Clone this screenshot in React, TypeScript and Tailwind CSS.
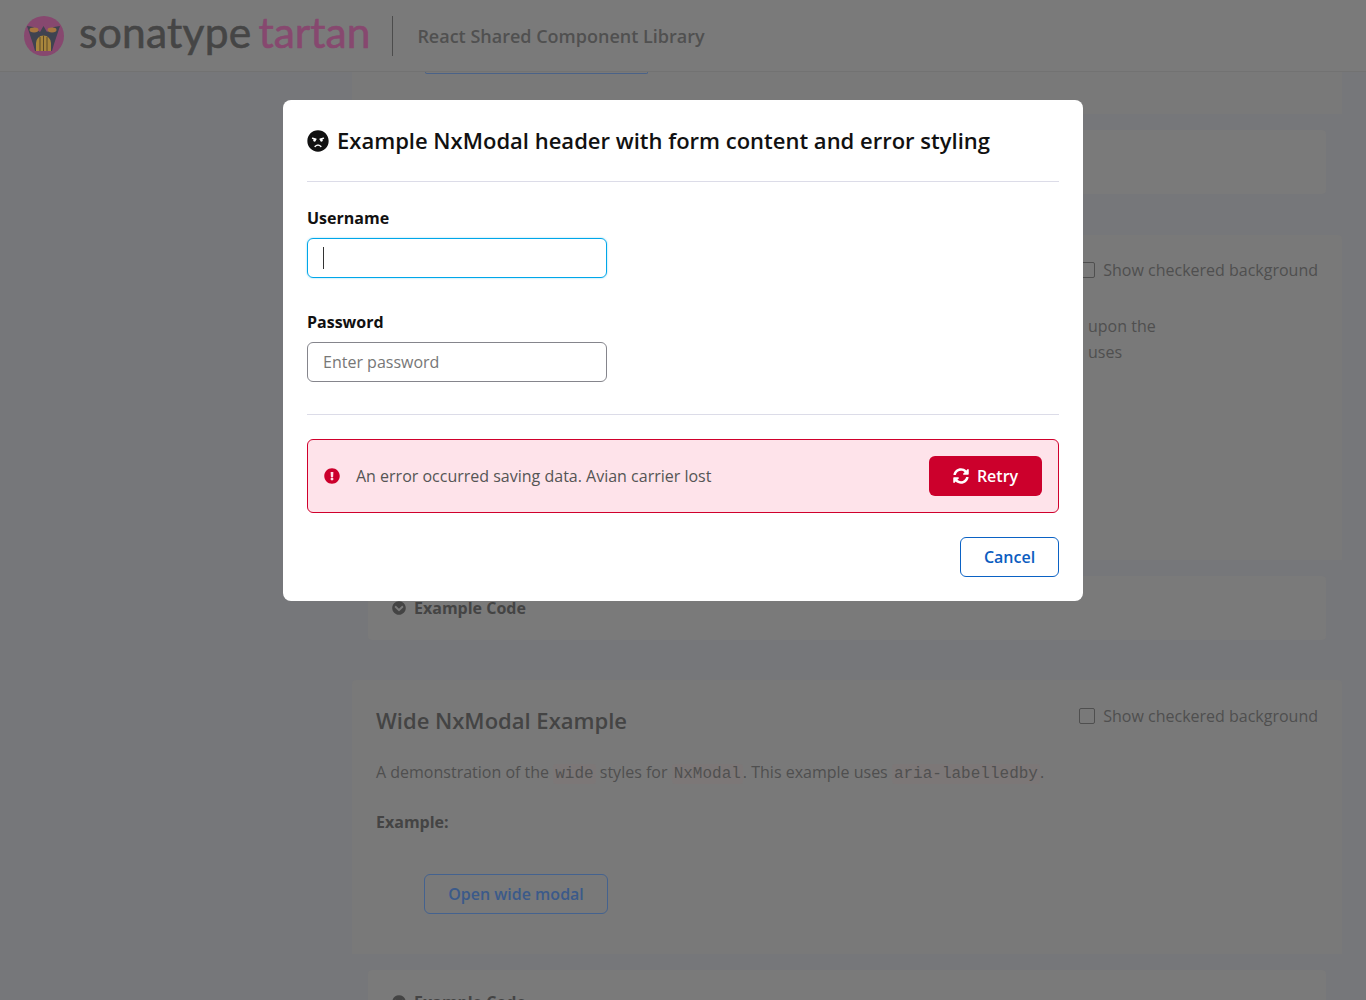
import { FaAngry, FaChevronCircleDown, FaExclamationCircle, FaSyncAlt } from 'react-icons/fa';

const FONT = "font-['Open_Sans',sans-serif]";
const CODE = "font-['Liberation_Mono',monospace] text-[16px] text-[#505050] bg-[#7c7777] px-[2px] py-px rounded-[3px]";
const WORDMARK = "text-[42.5px] leading-none font-['Lato',sans-serif] [-webkit-text-stroke:0.6px] -mt-[6px]";

function Logo() {
  return (
    <svg width="40" height="40" viewBox="0 0 40 40" className="shrink-0">
      <circle cx="20" cy="20" r="20" fill="#87486f" />
      <path d="M3 10 L9 11 L16 16 L19.5 10 L23 16 L30 11 L36 10 L30 28 L28 35 L11 35 L9 28 Z" fill="#3f4350" />
      <ellipse cx="10" cy="14" rx="4.5" ry="2.4" fill="#a6763f" />
      <ellipse cx="28" cy="14" rx="4.5" ry="2.4" fill="#a6763f" />
      <path d="M12 35 V27 A7.5 7.5 0 0 1 27 27 V35 Z" fill="#a8863c" />
      <path d="M16 21 V35 M19.5 19.5 V35 M23 21 V35" stroke="#5c4a28" strokeWidth="1" />
    </svg>
  );
}

function CodeBox({ label = true }: { label?: boolean }) {
  return (
    <div className="mx-4 h-16 bg-[#7a7a7a] rounded-[4px] px-6 flex items-center gap-2">
      {label && (
        <>
          <FaChevronCircleDown size={14} color="#444" />
          <span className="text-[16px] font-bold text-[#444]">Example Code</span>
        </>
      )}
    </div>
  );
}

function Checkered() {
  return (
    <label className="flex items-center gap-2 text-[16px] text-[#4f4f4f]">
      <span className="w-4 h-4 border border-[#4f4f4f] rounded-[2px]" />
      Show checkered background
    </label>
  );
}

export default function App() {
  return (
    <div className={`relative h-[1000px] overflow-hidden bg-[#76777a] ${FONT}`}>
      {/* page behind the modal */}
      <div className="h-[72px] bg-[#7a7a7a] border-b border-[#727272] flex items-center pl-6">
        <Logo />
        <span className={`ml-[15px] tracking-[0.25px] text-[#454545] ${WORDMARK}`}>sonatype</span>
        <span className={`ml-[7px] text-[#87486f] ${WORDMARK}`}>tartan</span>
        <div className="ml-[22px] w-px h-10 bg-[#4c4c4c]" />
        <span className="ml-6 mt-[2px] text-[18px] font-semibold text-[#505050]">React Shared Component Library</span>
      </div>

      <div className="pl-[352px] pr-6">
        <div className="h-[42px] bg-[#797979]">
          <div className="ml-[73px] w-[223px] h-[2px] border-x border-b border-[#4a6288] rounded-b-[4px]" />
        </div>
        <div className="py-4">
          <CodeBox label={false} />
        </div>

        <div className="mt-[25px] h-[325px] bg-[#797979] rounded-t-[4px] pt-[23px] px-6">
          <div className="flex justify-end">
            <Checkered />
          </div>
          <p className="mt-[31px] text-[16px] leading-[26px] text-[#4f4f4f] pl-[712px]">
            upon the
            <br />
            uses
          </p>
        </div>
        <div className="py-4">
          <CodeBox />
        </div>

        <div className="mt-6 h-[274px] bg-[#797979] rounded-t-[4px] pt-[23px] px-6">
          <div className="flex justify-between items-start">
            <h2 className="text-[22px] leading-[34px] font-semibold text-[#444]">Wide NxModal Example</h2>
            <div className="mt-px">
              <Checkered />
            </div>
          </div>
          <p className="mt-[22px] text-[16px] leading-[26px] text-[#4f4f4f]">
            A demonstration of the <code className={CODE}>wide</code> styles for <code className={CODE}>NxModal</code>. This example uses{' '}
            <code className={CODE}>aria-labelledby</code>.
          </p>
          <p className="mt-[22px] text-[16px] leading-[26px] font-bold text-[#444]">Example:</p>
          <div className="mt-[39px] ml-12">
            <button className="h-10 w-[184px] border border-[#44628f] rounded-[6px] text-[16px] font-semibold text-[#3b5a8a]">Open wide modal</button>
          </div>
        </div>
        <div className="py-4">
          <CodeBox />
        </div>
      </div>

      {/* modal */}
      <div className="absolute inset-0 pt-[100px]">
        <div className="mx-auto w-[800px] h-[501px] bg-white rounded-[8px] px-6 pt-6">
          <header className="h-[58px] border-b border-[#dcdce8] flex items-start">
            <FaAngry size={22} color="#111" className="mt-[6px] shrink-0" />
            <h2 className="ml-2 text-[22px] leading-[32px] font-semibold text-[#111]">Example NxModal header with form content and error styling</h2>
          </header>

          <div className="mt-[24px]">
            <div className="text-[16px] leading-[24px] font-bold text-[#111]">Username</div>
            <div className="mt-2 w-[300px] h-10 border border-[#00a6e9] rounded-[6px] shadow-[0_0_2px_#7fd3f4] flex items-center pl-[15px]">
              <span className="w-px h-[22px] bg-[#333]" />
            </div>
          </div>
          <div className="mt-[32px]">
            <div className="text-[16px] leading-[24px] font-bold text-[#111]">Password</div>
            <div className="mt-2 w-[300px] h-10 border border-[#85858c] rounded-[6px] flex items-center pl-[15px] text-[16px] text-[#777]">Enter password</div>
          </div>

          <div className="mt-8 border-t border-[#dcdce8]" />

          <div className="mt-6 h-[74px] bg-[#fee3ea] border border-[#d0002c] rounded-[6px] flex items-center px-4">
            <FaExclamationCircle size={16} color="#cc002c" className="shrink-0" />
            <span className="ml-4 text-[16px] text-[#555]">An error occurred saving data. Avian carrier lost</span>
            <button className="ml-auto w-[113px] h-10 bg-[#cc002c] rounded-[6px] flex items-center justify-center gap-2 text-[16px] font-semibold text-white">
              <FaSyncAlt size={16} color="#fff" />
              Retry
            </button>
          </div>

          <div className="mt-6 flex justify-end">
            <button className="w-[99px] h-10 border border-[#0b62c4] rounded-[6px] text-[16px] font-semibold text-[#0b5cc0]">Cancel</button>
          </div>
        </div>
      </div>
    </div>
  );
}
